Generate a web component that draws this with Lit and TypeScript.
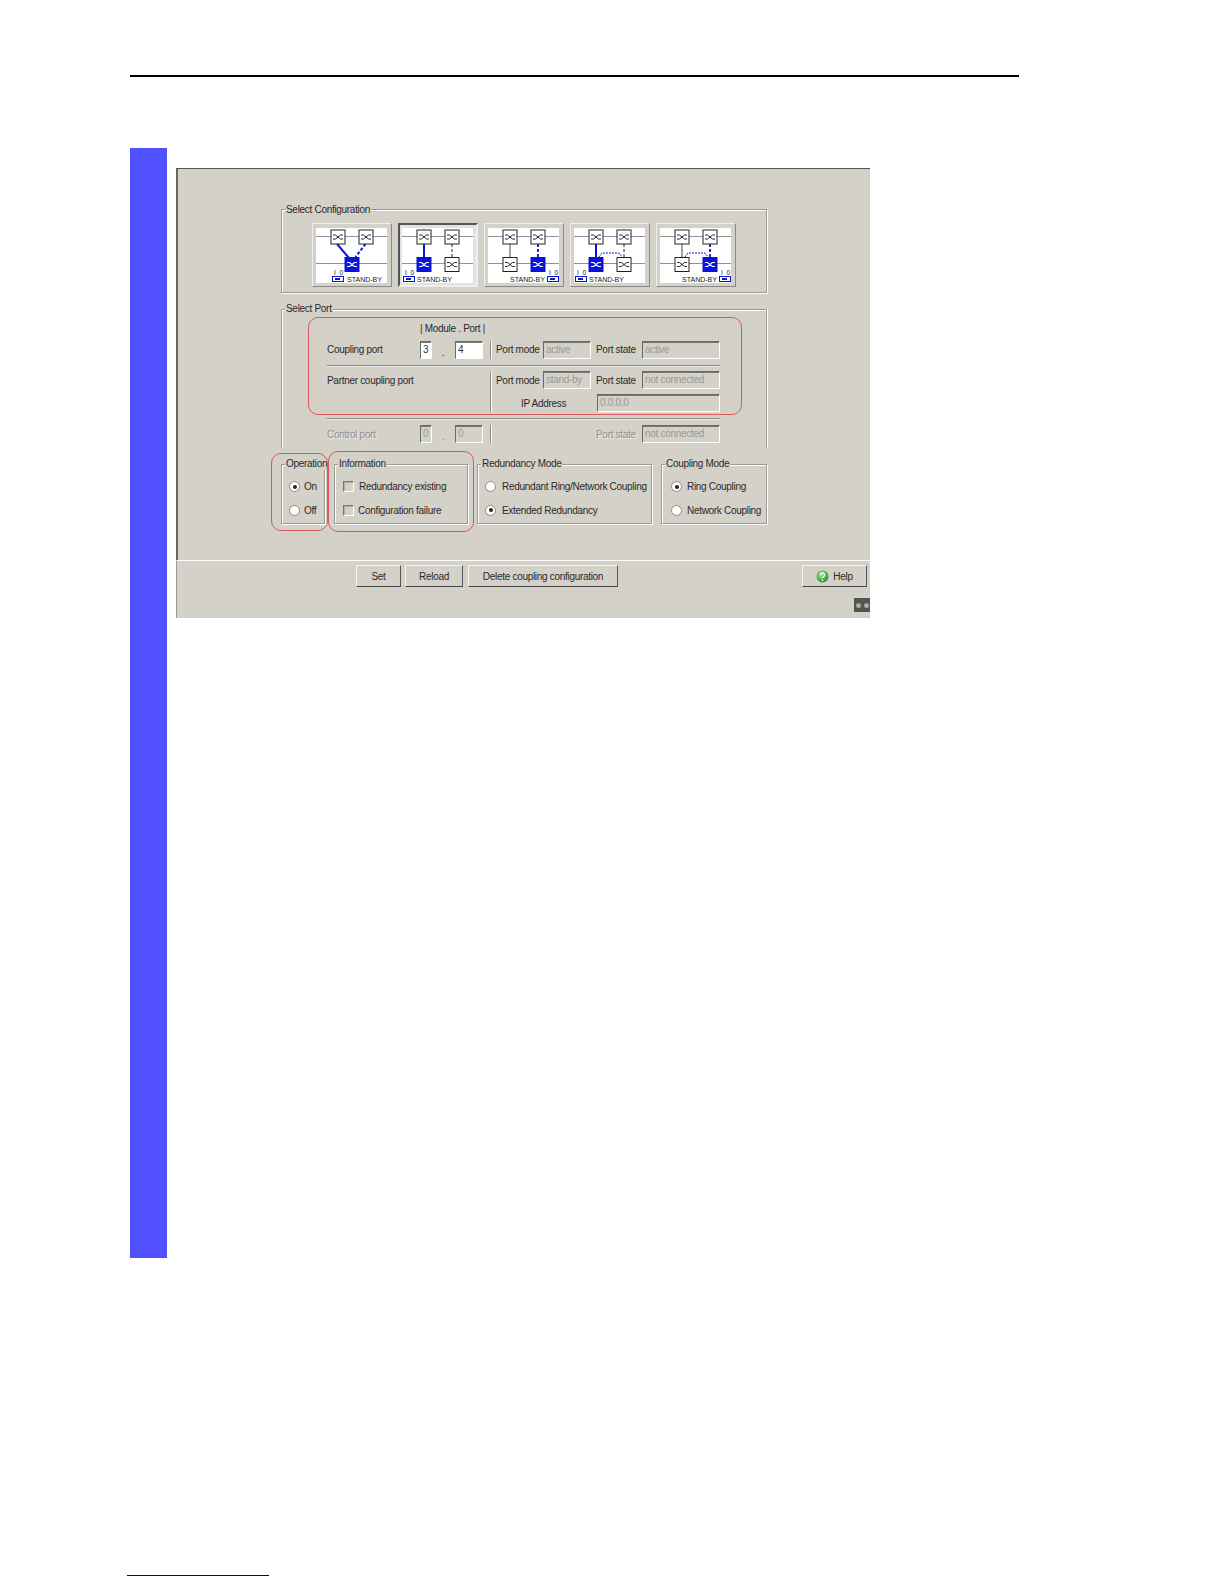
import { LitElement, html, css, svg } from "lit";
import { customElement } from "lit/decorators.js";

type Cfg = {
  leftBlue: boolean;
  arc: boolean;
  leftLine: "thick" | "thin" | "slant";
  textRight: boolean;
};

const BLUE = "#0a14d8";

function node(x: number, y: number, blue: boolean) {
  const fg = blue ? "#fff" : "#111";
  return svg`<rect x=${x + 0.5} y=${y + 0.5} width="14" height="14" fill=${blue ? BLUE : "#fff"} stroke=${blue ? BLUE : "#222"} stroke-width="1"/>
    <path d="M${x + 2.5} ${y + 5.5}h2.5l5 4h2.5M${x + 2.5} ${y + 9.5}h2.5l5-4h2.5" fill="none" stroke=${fg} stroke-width=${blue ? 1.2 : 0.9}/>`;
}

function diagram(c: Cfg, i: number) {
  const tx = i === 0 ? 31 : c.textRight ? 22 : 15;
  const ix = i === 0 ? 16 : c.textRight ? 59 : 1;
  const tw = 35;
  return html`<svg class="dia" viewBox="0 0 71 55" width="71" height="55">
    <path d="M0 8.5H71M0 35.5H71" stroke="#777" stroke-width="0.8" fill="none"/>
    ${i === 0
      ? svg`<path d="M21 16L33 30" stroke=${BLUE} stroke-width="2" fill="none"/>
            <path d="M49.5 16L39.5 29" stroke=${BLUE} stroke-width="2" stroke-dasharray="3 2" fill="none"/>`
      : svg`
      ${c.leftLine === "thick"
        ? svg`<path d="M22 16V29" stroke=${BLUE} stroke-width="2" fill="none"/>`
        : svg`<path d="M22 16V29" stroke="#333" stroke-width="0.9" fill="none"/>`}
      ${c.leftBlue
        ? svg`<path d="M50 16V29" stroke="#222" stroke-width="1" stroke-dasharray="3 2" fill="none"/>`
        : svg`<path d="M50 16V29" stroke=${BLUE} stroke-width="1.8" stroke-dasharray="3 2" fill="none"/>`}
    `}
    ${c.arc
      ? svg`<path d="M25 29L28 25H45L48 29" stroke=${BLUE} stroke-width="1" stroke-dasharray="2 1" fill="none"/>`
      : null}
    ${node(14.5, 1.5, false)} ${node(42.5, 1.5, false)}
    ${i === 0
      ? node(28.5, 29, true)
      : svg`${node(14.5, 29, c.leftBlue)} ${node(42.5, 29, !c.leftBlue)}`}
    <text x=${ix + 2} y="47" class="io">I 0</text>
    <rect x=${ix + 0.5} y="48.5" width="11" height="5" fill="#fff" stroke=${BLUE} stroke-width="1"/>
    <rect x=${ix + 3} y="50" width="5" height="2" fill=${BLUE}/>
    <text x=${tx} y="54" class="sb" textLength=${tw} lengthAdjust="spacingAndGlyphs">STAND-BY</text>
  </svg>`;
}

const CONFIGS: Cfg[] = [
  { leftBlue: false, arc: false, leftLine: "slant", textRight: false },
  { leftBlue: true, arc: false, leftLine: "thick", textRight: false },
  { leftBlue: false, arc: false, leftLine: "thin", textRight: true },
  { leftBlue: true, arc: true, leftLine: "thick", textRight: false },
  { leftBlue: false, arc: true, leftLine: "thin", textRight: true },
];

@customElement("app-root")
export class AppRoot extends LitElement {
  static styles = css`
    :host {
      display: block;
      width: 1224px;
      height: 1584px;
      background: #fff;
      overflow: hidden;
      font-family: "Liberation Sans", Arial, sans-serif;
      font-size: 10px;
      letter-spacing: -0.3px;
      color: #2a2a2a;
    }
    .rule {
      margin: 75px 0 0 130px;
      width: 889px;
      height: 2px;
      background: #000;
    }
    .main {
      display: flex;
      margin-top: 71px;
      margin-left: 130px;
      gap: 9px;
      align-items: flex-start;
    }
    .bar {
      width: 37px;
      height: 1110px;
      background: #5050ff;
    }
    .foot {
      margin: 317px 0 0 127px;
      width: 142px;
      height: 1px;
      background: #000080;
    }
    .win {
      position: relative;
      margin-top: 20px;
      width: 694px;
      height: 450px;
      background: #d4d1c9;
      box-sizing: border-box;
      border-top: 1px solid #555;
      display: flex;
      flex-direction: column;
    }
    .top {
      height: 391px;
      box-sizing: border-box;
      border-left: 2px solid #666;
      padding: 40px 0 0 103px;
    }
    .low {
      flex: 1;
      border-top: 1px solid #fff;
      border-left: 1px solid #999;
      position: relative;
      padding: 4px 0 0 179px;
      display: flex;
    }
    .group {
      position: relative;
      box-sizing: border-box;
      border: 1px solid #9a9a92;
      box-shadow: 1px 1px 0 #fff, inset 1px 1px 0 #fff;
    }
    .legend {
      position: absolute;
      top: -7px;
      left: 3px;
      padding: 0 1px;
      line-height: 13px;
      background: #d4d1c9;
      white-space: nowrap;
    }
    .port .legend,
    .tail .legend {
      top: -8px;
    }
    .cfg {
      width: 486px;
      height: 84px;
      padding: 13px 0 0 30px;
      display: flex;
      gap: 6px;
    }
    .thumb {
      box-sizing: border-box;
      width: 80px;
      height: 64px;
      padding: 4px 3px;
      background: #d4d1c9;
      border: 1px solid #aaa;
      border-color: #eee #8a8a84 #8a8a84 #eee;
    }
    .thumb.on {
      border: 2px solid #555;
      border-right-color: #eee;
      border-bottom-color: #eee;
      padding: 3px 2px;
      background: #e4e2dc;
    }
    .dia {
      display: block;
      background: #fff;
      width: 71px;
      height: 55px;
      letter-spacing: 0;
    }
    .dia .sb {
      font-size: 7.5px;
      fill: #222;
    }
    .dia .io {
      font-size: 6.5px;
      fill: #222;
      letter-spacing: 1px;
    }
    .port {
      width: 486px;
      height: 139px;
      margin-top: 16px;
      border-bottom: none;
      box-shadow: inset 1px 1px 0 #fff, 1px 0 0 #fff;
      padding: 12px 0 0 45px;
      display: grid;
      grid-template-columns: 93px 12px 23px 28px 7px 6px 47px 48px 51px 78px;
      grid-template-rows: 19px 18px 12px 18px 5px 18px 13px 18px;
      justify-content: start;
    }
    .l {
      align-self: center;
      white-space: nowrap;
    }
    .up {
      margin-top: -2px;
    }
    .lh {
      grid-column: 2 / span 4;
      align-self: start;
      white-space: nowrap;
      padding-top: 1px;
    }
    .inp {
      box-sizing: border-box;
      height: 18px;
      padding-left: 2px;
      line-height: 15px;
      border: 1px solid;
      border-color: #6a6a64 #fff #fff #6a6a64;
      box-shadow: inset 0 1px 0 #777;
      color: #9a9a94;
      overflow: hidden;
      white-space: nowrap;
    }
    .inp.live {
      background: #fff;
      color: #333;
    }
    .dot {
      text-align: center;
      align-self: end;
      line-height: 12px;
      padding-right: 1px;
    }
    .vs {
      border-left: 1px solid #8a8a84;
      box-shadow: 1px 0 0 #fff inset;
    }
    .hs {
      grid-column: 1 / -1;
      align-self: center;
      height: 1px;
      background: #8a8a84;
      box-shadow: 0 1px 0 #eee;
    }
    .pl {
      padding-left: 5px;
    }
    .dis {
      color: #8f8f89;
      text-shadow: 1px 1px 0 #eee;
    }
    .tail {
      display: flex;
      margin-top: 16px;
    }
    .tail .group {
      height: 60px;
      padding: 0;
      display: flex;
      flex-direction: column;
    }
    .opt {
      display: flex;
      align-items: center;
      height: 23.5px;
      white-space: nowrap;
    }
    .opts {
      padding-top: 10px;
    }
    .radio {
      flex: none;
      box-sizing: border-box;
      width: 11px;
      height: 11px;
      border-radius: 50%;
      background: #fff;
      border: 1px solid #8a8a84;
      display: flex;
      align-items: center;
      justify-content: center;
    }
    .radio i {
      width: 4px;
      height: 4px;
      border-radius: 50%;
      background: #222;
    }
    .check {
      flex: none;
      box-sizing: border-box;
      width: 11px;
      height: 11px;
      border: 1px solid;
      border-color: #777 #fff #fff #777;
      box-shadow: inset 1px 1px 0 #aaa;
    }
    .btn {
      box-sizing: border-box;
      height: 22px;
      display: flex;
      align-items: center;
      justify-content: center;
      gap: 4px;
      border: 1px solid;
      border-color: #f4f4f0 #555 #444 #f4f4f0;
      background: #d4d1c9;
    }
    .w-set { width: 45px; }
    .w-rel { width: 58px; margin-left: 4px; }
    .w-del { width: 150px; margin-left: 5px; }
    .help {
      width: 65px;
      margin-left: 184px;
    }
    .ring {
      position: absolute;
      box-sizing: border-box;
      border: 1px solid #d9595f;
      border-radius: 10px;
      pointer-events: none;
    }
    .r1 { left: 132px; top: 148px; width: 434px; height: 98px; }
    .r2 { left: 95px; top: 284px; width: 57px; height: 78px; border-width: 1.5px; }
    .r3 { left: 152px; top: 282px; width: 146px; height: 81px; border-width: 1.5px; }
    .plug {
      position: absolute;
      right: 0;
      bottom: 6px;
      width: 16px;
      height: 14px;
      background: #55554f;
      display: flex;
      align-items: center;
      justify-content: space-around;
    }
    .plug i {
      width: 5px;
      height: 5px;
      border-radius: 50%;
      background: #aaa;
    }
    .g-op { width: 44px; }
    .g-in { width: 134px; margin-left: 9px; }
    .g-re { width: 175px; margin-left: 9px; }
    .g-co { width: 106px; margin-left: 9px; }
    .p7 { padding-left: 7px; }
    .p8 { padding-left: 8px; }
    .p9 { padding-left: 9px; }
    .m4 { margin-left: 4px; }
    .m5 { margin-left: 5px; }
    .m6 { margin-left: 6px; }
  `;

  private radio(on: boolean) {
    return html`<span class="radio">${on ? html`<i></i>` : null}</span>`;
  }

  render() {
    return html`
      <div class="rule"></div>
      <div class="main">
        <div class="bar"></div>
        <div class="win">
          <div class="top">
            <div class="group cfg">
              <span class="legend">Select Configuration</span>
              ${CONFIGS.map(
                (c, i) => html`<div class="thumb ${i === 1 ? "on" : ""}">${diagram(c, i)}</div>`
              )}
            </div>
            <div class="group port">
              <span class="legend">Select Port</span>
              <span style="grid-column:1"></span>
              <span class="lh">| Module . Port |</span>
              <span class="l up" style="grid-column:1;grid-row:2">Coupling port</span>
              <span class="inp live" style="grid-column:2;grid-row:2">3</span>
              <span class="dot" style="grid-column:3;grid-row:2">.</span>
              <span class="inp live" style="grid-column:4;grid-row:2">4</span>
              <span class="vs" style="grid-column:6;grid-row:2"></span>
              <span class="l up" style="grid-column:7;grid-row:2">Port mode</span>
              <span class="inp" style="grid-column:8;grid-row:2">active</span>
              <span class="l pl up" style="grid-column:9;grid-row:2">Port state</span>
              <span class="inp" style="grid-column:10;grid-row:2">active</span>
              <span class="hs" style="grid-row:3"></span>
              <span class="l" style="grid-column:1 / span 5;grid-row:4">Partner coupling port</span>
              <span class="vs" style="grid-column:6;grid-row:4 / span 3"></span>
              <span class="l" style="grid-column:7;grid-row:4">Port mode</span>
              <span class="inp" style="grid-column:8;grid-row:4">stand-by</span>
              <span class="l pl" style="grid-column:9;grid-row:4">Port state</span>
              <span class="inp" style="grid-column:10;grid-row:4">not connected</span>
              <span class="l" style="grid-column:7 / span 2;grid-row:6;padding-left:25px">IP Address</span>
              <span class="inp" style="grid-column:9 / span 2;grid-row:6;margin-left:6px">0.0.0.0</span>
              <span class="hs" style="grid-row:7"></span>
              <span class="l dis" style="grid-column:1;grid-row:8">Control port</span>
              <span class="inp" style="grid-column:2;grid-row:8">0</span>
              <span class="dot dis" style="grid-column:3;grid-row:8">.</span>
              <span class="inp" style="grid-column:4;grid-row:8">0</span>
              <span class="vs" style="grid-column:6;grid-row:8"></span>
              <span class="l pl dis" style="grid-column:9;grid-row:8">Port state</span>
              <span class="inp" style="grid-column:10;grid-row:8">not connected</span>
            </div>
            <div class="tail">
              <div class="group g-op">
                <span class="legend">Operation</span>
                <div class="opts p7">
                  <div class="opt">${this.radio(true)}<span class="m4">On</span></div>
                  <div class="opt">${this.radio(false)}<span class="m4">Off</span></div>
                </div>
              </div>
              <div class="group g-in">
                <span class="legend">Information</span>
                <div class="opts p8">
                  <div class="opt"><span class="check"></span><span class="m5">Redundancy existing</span></div>
                  <div class="opt"><span class="check"></span><span class="m4">Configuration failure</span></div>
                </div>
              </div>
              <div class="group g-re">
                <span class="legend">Redundancy Mode</span>
                <div class="opts p7">
                  <div class="opt">${this.radio(false)}<span class="m6">Redundant Ring/Network Coupling</span></div>
                  <div class="opt">${this.radio(true)}<span class="m6">Extended Redundancy</span></div>
                </div>
              </div>
              <div class="group g-co">
                <span class="legend">Coupling Mode</span>
                <div class="opts p9">
                  <div class="opt">${this.radio(true)}<span class="m5">Ring Coupling</span></div>
                  <div class="opt">${this.radio(false)}<span class="m5">Network Coupling</span></div>
                </div>
              </div>
            </div>
          </div>
          <div class="low">
            <div class="btn w-set">Set</div>
            <div class="btn w-rel">Reload</div>
            <div class="btn w-del">Delete coupling configuration</div>
            <div class="btn help">
              <svg width="13" height="13" viewBox="0 0 13 13">
                <defs>
                  <radialGradient id="hg" cx="0.4" cy="0.35" r="0.7">
                    <stop offset="0" stop-color="#9fe58f" />
                    <stop offset="1" stop-color="#1f8f2a" />
                  </radialGradient>
                </defs>
                <circle cx="6.5" cy="6.5" r="6" fill="url(#hg)" />
                <path d="M4.6 5a2 2 0 1 1 3 1.7c-.8.5-1.1.8-1.1 1.6" fill="none" stroke="#fff" stroke-width="1.3" />
                <circle cx="6.5" cy="10.2" r="0.8" fill="#fff" />
              </svg>
              <span>Help</span>
            </div>
            <div class="plug"><i></i><i></i></div>
          </div>
          <div class="ring r1"></div>
          <div class="ring r2"></div>
          <div class="ring r3"></div>
        </div>
      </div>
      <div class="foot"></div>
    `;
  }
}
